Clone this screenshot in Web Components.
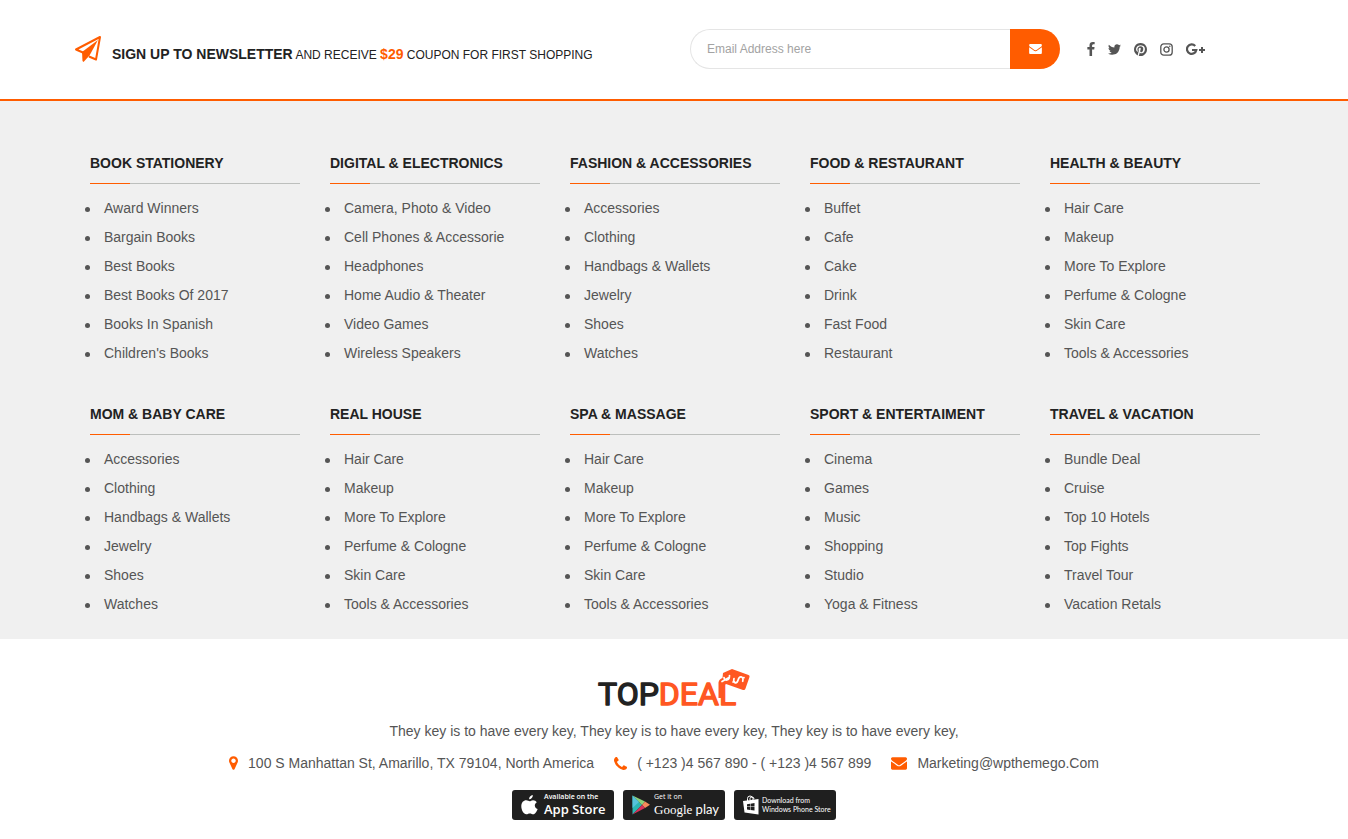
<!DOCTYPE html>
<html lang="en">
<head>
<meta charset="utf-8">
<title>TopDeal</title>
<meta name="viewport" content="width=device-width, initial-scale=1">
<style>
  body {
    margin: 0;
    background: #fff;
    color: #555;
    font: 14px/20px "Liberation Sans", Arial, sans-serif;
    --accent: #ff5c00;
    --ink: #222;
  }
</style>
</head>
<body>
<site-footer>
  <newsletter-bar slot="top">
    <strong>SIGN UP TO NEWSLETTER</strong> AND RECEIVE <strong class="price">$29</strong> COUPON FOR FIRST SHOPPING
  </newsletter-bar>

  <menu-column heading="BOOK STATIONERY"><menu-link>Award Winners</menu-link><menu-link>Bargain Books</menu-link><menu-link>Best Books</menu-link><menu-link>Best Books Of 2017</menu-link><menu-link>Books In Spanish</menu-link><menu-link>Children's Books</menu-link></menu-column>
  <menu-column heading="DIGITAL &amp; ELECTRONICS"><menu-link>Camera, Photo &amp; Video</menu-link><menu-link>Cell Phones &amp; Accessorie</menu-link><menu-link>Headphones</menu-link><menu-link>Home Audio &amp; Theater</menu-link><menu-link>Video Games</menu-link><menu-link>Wireless Speakers</menu-link></menu-column>
  <menu-column heading="FASHION &amp; ACCESSORIES"><menu-link>Accessories</menu-link><menu-link>Clothing</menu-link><menu-link>Handbags &amp; Wallets</menu-link><menu-link>Jewelry</menu-link><menu-link>Shoes</menu-link><menu-link>Watches</menu-link></menu-column>
  <menu-column heading="FOOD &amp; RESTAURANT"><menu-link>Buffet</menu-link><menu-link>Cafe</menu-link><menu-link>Cake</menu-link><menu-link>Drink</menu-link><menu-link>Fast Food</menu-link><menu-link>Restaurant</menu-link></menu-column>
  <menu-column heading="HEALTH &amp; BEAUTY"><menu-link>Hair Care</menu-link><menu-link>Makeup</menu-link><menu-link>More To Explore</menu-link><menu-link>Perfume &amp; Cologne</menu-link><menu-link>Skin Care</menu-link><menu-link>Tools &amp; Accessories</menu-link></menu-column>
  <menu-column heading="MOM &amp; BABY CARE"><menu-link>Accessories</menu-link><menu-link>Clothing</menu-link><menu-link>Handbags &amp; Wallets</menu-link><menu-link>Jewelry</menu-link><menu-link>Shoes</menu-link><menu-link>Watches</menu-link></menu-column>
  <menu-column heading="REAL HOUSE"><menu-link>Hair Care</menu-link><menu-link>Makeup</menu-link><menu-link>More To Explore</menu-link><menu-link>Perfume &amp; Cologne</menu-link><menu-link>Skin Care</menu-link><menu-link>Tools &amp; Accessories</menu-link></menu-column>
  <menu-column heading="SPA &amp; MASSAGE"><menu-link>Hair Care</menu-link><menu-link>Makeup</menu-link><menu-link>More To Explore</menu-link><menu-link>Perfume &amp; Cologne</menu-link><menu-link>Skin Care</menu-link><menu-link>Tools &amp; Accessories</menu-link></menu-column>
  <menu-column heading="SPORT &amp; ENTERTAIMENT"><menu-link>Cinema</menu-link><menu-link>Games</menu-link><menu-link>Music</menu-link><menu-link>Shopping</menu-link><menu-link>Studio</menu-link><menu-link>Yoga &amp; Fitness</menu-link></menu-column>
  <menu-column heading="TRAVEL &amp; VACATION"><menu-link>Bundle Deal</menu-link><menu-link>Cruise</menu-link><menu-link>Top 10 Hotels</menu-link><menu-link>Top Fights</menu-link><menu-link>Travel Tour</menu-link><menu-link>Vacation Retals</menu-link></menu-column>

  <company-info slot="bottom">They key is to have every key, They key is to have every key, They key is to have every key,</company-info>
</site-footer>

<script>
const ENVELOPE = '<path d="M1792 710v794q0 66-47 113t-113 47h-1472q-66 0-113-47t-47-113v-794q44 49 101 87 362 246 497 345 57 42 92.500 65.500t94.500 48 110 24.500h2q51 0 110-24.500t94.500-48 92.500-65.500q170-123 498-345 57-39 100-87zm0-294q0 79-49 151t-122 123q-376 261-468 325-10 7-42.500 31t-54 38.500-52 32.500-57.500 27-50 9h-2q-23 0-50-9t-57.500-27-52-32.500-54-38.500-42.500-31q-91-64-262-182.500t-205-142.500q-62-42-117-115.500t-55-136.500q0-78 41.500-130t118.500-52h1472q65 0 112.500 47t47.500 113z"/>';

// name: [width, height, viewBox, content]
const ICONS = {
  plane: [28, 28, '0 0 28 28', '<path fill="none" stroke="currentColor" stroke-width="2" stroke-linejoin="round" d="M10 18 2 14.500 26 2 22 24.500 15 21.500"/><path d="M8 17 24 5 15.500 20.500 9.500 27 8.500 26z"/>'],
  mail: [13, 10, '0 256 1792 1408', ENVELOPE],
  maillarge: [16, 13, '0 256 1792 1408', ENVELOPE],
  facebook: [8, 14, '479 0 864 1664', '<path d="M1343 12v264h-157q-86 0-116 36t-30 108v189h293l-39 296h-254v759h-306v-759h-255v-296h255v-218q0-186 104-288.500t277-102.500q147 0 228 12z"/>'],
  twitter: [13, 11, '108 256 1576 1280', '<path d="M1684 408q-67 98-162 167 1 14 1 42 0 130-38 259.500t-115.500 248.500-184.500 210.500-258 146-323 54.500q-271 0-496-145 35 4 78 4 225 0 401-138-105-2-188-64.500t-114-159.500q33 5 61 5 43 0 85-11-112-23-185.500-111.500t-73.500-205.500v-4q68 38 146 41-66-44-105-115t-39-154q0-88 44-163 121 149 294.500 238.500t371.500 99.500q-8-38-8-74 0-134 94.500-228.500t228.500-94.500q140 0 236 102 109-21 205-78-37 115-142 178 93-10 186-50z"/>'],
  pinterest: [13, 13, '128 128 1536 1536', '<path d="M1664 896q0 209-103 385.500t-279.500 279.500-385.500 103q-111 0-218-32 59-93 78-164 9-34 54-211 20 39 73 67.500t114 28.500q121 0 216-68.500t147-188.500 52-270q0-114-59.500-214t-172.500-163-255-63q-105 0-196 29t-154.500 77-109 110.500-67 129.500-21.500 134q0 104 40 183t117 111q30 12 38-20 2-7 8-31t8-30q6-23-11-43-51-61-51-151 0-151 104.500-259.500t273.500-108.500q151 0 235.500 82t84.500 213q0 170-68.500 289t-175.500 119q-61 0-98-43.500t-23-104.500q8-35 26.500-93.500t30-103 11.500-75.500q0-50-27-83t-77-33q-62 0-105 57t-43 142q0 73 25 122l-99 418q-17 70-13 177-206-91-333-281t-127-423q0-209 103-385.500t279.500-279.500 385.500-103 385.500 103 279.500 279.500 103 385.500z"/>'],
  instagram: [13, 13, '0 0 13 13', '<g fill="none" stroke="currentColor" stroke-width="1.300"><rect x=".8" y=".8" width="11.400" height="11.400" rx="3"/><circle cx="6.500" cy="6.500" r="2.600"/></g><circle cx="9.800" cy="3.200" r=".8"/>'],
  googleplus: [19, 13, '0 0 19 13', '<path fill="none" stroke="currentColor" stroke-width="2.200" d="M9.200 3A4.700 4.700 0 1 0 10.300 7H6"/><path d="M15 4h2v2h2v2h-2v2h-2V8h-2V6h2z"/>'],
  marker: [9, 14, '384 128 1024 1536', '<path d="M1152 640q0-106-75-181t-181-75-181 75-75 181 75 181 181 75 181-75 75-181zm256 0q0 109-33 179l-364 774q-16 33-47.500 52t-67.500 19-67.500-19-46.500-52l-365-774q-33-70-33-179 0-212 150-362t362-150 362 150 150 362z"/>'],
  phone: [13, 13, '192 128 1408 1408', '<path d="M1600 1240q0 27-10 70.500t-21 68.500q-21 50-122 106-94 51-186 51-27 0-53-3.500t-57.500-12.500-47-14.500-55.500-20.500-49-18q-98-35-175-83-127-79-264-216t-216-264q-48-77-83-175-3-9-18-49t-20.500-55.500-14.500-47-12.500-57.500-3.500-53q0-92 51-186 56-101 106-122 25-11 68.500-21t70.500-10q14 0 21 3 18 6 53 76 11 19 30 54t35 63.500 31 53.500q3 4 17.500 25t21.500 35.500 7 28.500q0 20-28.500 50t-62 55-62 53-28.500 46q0 9 5 22.500t8.500 20.500 14 24 11.500 19q76 137 174 235t235 174q2 1 19 11.500t24 14 20.500 8.500 22.500 5q18 0 46-28.500t53-62 55-62 50-28.500q14 0 28.500 7t35.500 21.500 25 17.500q25 15 53.500 31t63.500 35 54 30q70 35 76 53 3 7 3 21z"/>'],
  apple: [17, 20, '0 0 17 20', '<path d="M11.800 0c.2 2.300-1.600 4.300-3.700 4.300C7.900 2.200 9.700.2 11.800 0zM12 5.200c1.700 0 3 .8 3.800 2-2.900 1.800-2.500 5.500.8 6.800-.8 2.400-2.500 5.300-4.300 5.300-1.300 0-1.900-.8-3.500-.8s-2.200.8-3.500.8C2.700 19.300.3 15.100.3 11.300.3 7.500 2.500 5.300 5.200 5.300c1.500 0 2.700 1 3.500 1s1.900-1.100 3.300-1.100z"/>'],
  play: [18, 20, '0 0 18 20', '<path fill="#2bb7b3" d="M.5.500 10 10 .5 19.500z"/><path fill="#8bd07a" d="M.5.500 13 6.500 10 10z"/><path fill="#f58a5b" d="m13 6.500 5 3.300-5 3.300-3-3.100z"/><path fill="#d8315b" d="m.5 19.500 12.500-6.400-3-3.100z"/><path fill="#55c3dc" d="M.5.500 7 7 .5 13z"/>'],
  windows: [16, 20, '0 0 16 20', '<path fill="none" stroke="currentColor" d="M4.500 6V3.500q0-2.500 2.500-2.500t3 2.500V5M7 5V3.500Q7 2 9 2t2 2"/><path d="m0 6 15.500-2v15.500L1.500 17.500z"/><path fill="#1f1f1f" d="m4 9.200 3-.4v2.700H4zm3.500-.5 4-.6v3.400h-4zM4 12h3v2.900l-3-.4zm3.500 0h4v3.600l-4-.6z"/>']
};

function define(name, html, setup) {
  const template = document.createElement('template');
  template.innerHTML = html;
  customElements.define(name, class extends HTMLElement {
    constructor() {
      super();
      this.attachShadow({ mode: 'open' }).append(template.content.cloneNode(true));
    }
    connectedCallback() {
      if (setup) setup(this, this.shadowRoot);
    }
  });
}

define('social-link', `
  <style>:host{display:block}a{display:block;color:#555}</style>
  <a href="#"><ui-icon></ui-icon></a>`, (host, root) => {
  root.querySelector('a').setAttribute('aria-label', host.getAttribute('name'));
  root.querySelector('ui-icon').setAttribute('name', host.getAttribute('name'));
});

define('newsletter-bar', `
  <style>
    :host { display: block; border-bottom: 2px solid var(--accent); color: var(--ink); }
    .row { display: grid; grid-template-columns: minmax(0, 616fr) 370px minmax(0, 214fr); align-items: center; max-width: 1200px; margin: 0 auto; padding: 29px 0 30px; }
    .pitch { display: flex; align-items: center; gap: 10px; }
    .pitch ui-icon { color: var(--accent); }
    p { margin: 10px 0 0; font-size: 12px; line-height: 20px; }
    ::slotted(strong) { font-size: 14px; }
    ::slotted(.price) { color: var(--accent); }
    form { display: flex; }
    input { flex: 1; min-width: 0; height: 40px; box-sizing: border-box; padding: 0 16px; border: 1px solid #e5e5e5; border-right: 0; border-radius: 20px 0 0 20px; font: 12px "Liberation Sans", Arial, sans-serif; background: #fff; outline: 0; }
    input::placeholder { color: #a3a3a3; }
    button { display: grid; place-items: center; width: 50px; height: 40px; padding: 0; border: 0; border-radius: 0 20px 20px 0; background: var(--accent); color: #fff; }
    nav { display: flex; align-items: center; gap: 13px; padding-left: 27px; }
  </style>
  <div class="row">
    <div class="pitch"><ui-icon name="plane"></ui-icon><p><slot></slot></p></div>
    <form>
      <input type="email" aria-label="Email address" placeholder="Email Address here">
      <button type="button" aria-label="Subscribe"><ui-icon name="mail"></ui-icon></button>
    </form>
    <nav aria-label="Social">
      <social-link name="facebook"></social-link><social-link name="twitter"></social-link><social-link name="pinterest"></social-link><social-link name="instagram"></social-link><social-link name="googleplus"></social-link>
    </nav>
  </div>`);

define('menu-link', `
  <style>
    :host { display: flex; align-items: center; gap: 14px; margin-left: -5px; line-height: 29px; }
    :host::before { content: ""; width: 5px; height: 5px; margin-top: 2px; border-radius: 50%; background: #555; }
    a { color: inherit; text-decoration: none; }
    a:hover { color: var(--accent); }
  </style>
  <a href="#"><slot></slot></a>`, host => host.setAttribute('role', 'listitem'));

define('menu-column', `
  <style>
    :host { display: block; min-width: 0; }
    h2 { margin: 0; padding-bottom: 10px; font-size: 14px; line-height: 20px; color: var(--ink); }
    .rule { height: 1px; background: linear-gradient(to right, var(--accent) 40px, #bdbfbd 40px); }
    .list { margin-top: 10px; }
  </style>
  <h2></h2><div class="rule"></div>
  <div class="list" role="list"><slot></slot></div>`, (host, root) => {
  root.querySelector('h2').textContent = host.getAttribute('heading');
});

define('brand-logo', `
  <style>:host{display:block}a{display:block}svg{display:block;overflow:visible}text{font:400 32px Roboto,sans-serif;stroke-width:1.4;stroke-linejoin:round}</style>
  <a href="#" aria-label="TopDeal home">
    <svg width="152" height="40" viewBox="0 0 152 40">
      <text x="0" y="37" fill="#222" stroke="#222">TOP<tspan fill="#ff5722" stroke="#ff5722">DEAL</tspan></text>
      <path fill="#ff5722" d="M120.500 14.500Q121 11 124.500 10L125 5 134 1 150.500 7Q152 7.500 151.500 9L147.500 20.500Q147 22.500 145 22L128 16 124.500 18.500V30h-4z"/>
      <g fill="none" stroke="#fff" stroke-width="1.700" stroke-linecap="round">
        <path d="M124 13.500 131 9.500M126 9.500q.5 3 3 2.500t2.500-4.500"/>
        <path d="M136 10.500q-1 4 1.200 4.300t3-3 3-3q2.500.5 1.500 4.500M135 14l1.500-.4M144.500 10l1.500-.4"/>
      </g>
    </svg>
  </a>`);

define('store-badge', `
  <style>
    :host { display: block; }
    a { display: flex; align-items: center; gap: 6px; box-sizing: border-box; width: 102px; height: 30px; padding-left: 9px; border-radius: 3px; background: #1f1f1f; color: #fff; text-decoration: none; font-family: "Open Sans", sans-serif; white-space: nowrap; }
    span { display: block; font-size: 7px; line-height: 8px; }
    b { display: block; font-weight: 600; font-size: 13px; line-height: 16px; }
    ::slotted(i) { font: 13px "Liberation Serif", serif; }
    :host([name="apple"]) span { font-weight: 600; }
    :host([name="play"]) a { gap: 4px; }
    :host([name="play"]) b { font-weight: 400; font-family: Lato, sans-serif; }
    :host([name="windows"]) a { gap: 3px; font-family: Lato, sans-serif; }
    :host([name="windows"]) b { font-weight: 400; font-size: 7px; line-height: 10px; }
  </style>
  <a href="#"><ui-icon></ui-icon><div><span><slot name="lead"></slot></span><b><slot></slot></b></div></a>`, (host, root) => {
  root.querySelector('ui-icon').setAttribute('name', host.getAttribute('name'));
});

define('contact-item', `
  <style>
    :host { display: flex; align-items: center; gap: 10px; margin-right: 20px; }
    ui-icon { color: var(--accent); }
  </style>
  <ui-icon></ui-icon><span><slot></slot></span>`, (host, root) => {
  root.querySelector('ui-icon').setAttribute('name', host.getAttribute('icon'));
});

define('company-info', `
  <style>
    :host { display: flex; flex-direction: column; align-items: center; padding: 29px 0 19px; }
    p { margin: 13px 0 12px; text-align: center; }
    .contacts, .stores { display: flex; flex-wrap: wrap; justify-content: center; }
    .stores { gap: 9px; margin-top: 17px; }
    a { color: inherit; text-decoration: none; }
  </style>
  <brand-logo></brand-logo>
  <p><slot></slot></p>
  <div class="contacts">
    <contact-item icon="marker">100 S Manhattan St, Amarillo, TX 79104, North America</contact-item>
    <contact-item icon="phone">( +123 )4 567 890 - ( +123 )4 567 899</contact-item>
    <contact-item icon="maillarge"><a href="mailto:Marketing@wpthemego.Com">Marketing@wpthemego.Com</a></contact-item>
  </div>
  <div class="stores">
    <store-badge name="apple"><span slot="lead">Available on the</span>App Store</store-badge>
    <store-badge name="play"><span slot="lead">Get it on</span><i>Google</i> play</store-badge>
    <store-badge name="windows"><span slot="lead">Download from</span>Windows Phone Store</store-badge>
  </div>`);

define('site-footer', `
  <style>
    :host { display: block; }
    .menus { background: #f0f0f0; padding: 52px 0 20px; }
    .grid { display: grid; grid-template-columns: repeat(5, minmax(0, 1fr)); gap: 36px 30px; max-width: 1170px; margin: 0 auto; padding-left: 2px; }
  </style>
  <footer>
    <slot name="top"></slot>
    <div class="menus"><div class="grid"><slot></slot></div></div>
    <slot name="bottom"></slot>
  </footer>`);

// Registered last, once the elements above have named the icons they hold.
define('ui-icon', '<style>:host{display:block;flex:none}svg{display:block;fill:currentColor}</style><svg aria-hidden="true"></svg>', (host, root) => {
  const [w, h, box, content] = ICONS[host.getAttribute('name')];
  const svg = root.querySelector('svg');
  svg.setAttribute('width', w);
  svg.setAttribute('height', h);
  svg.setAttribute('viewBox', box);
  svg.innerHTML = content;
});
</script>
</body>
</html>
